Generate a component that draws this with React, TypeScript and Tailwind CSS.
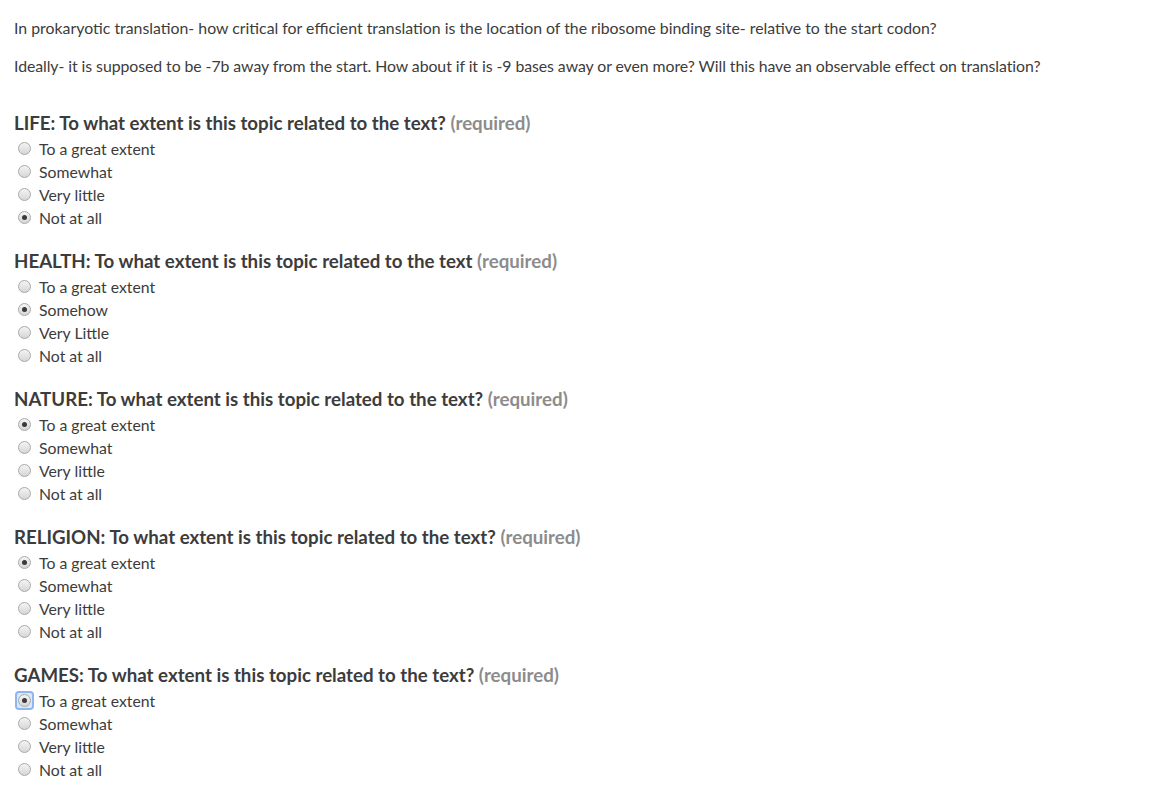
import React from "react";

type Group = { title: string; q: string; options: string[]; checked: number; focus?: boolean };

const groups: Group[] = [
  { title: "LIFE:", q: " To what extent is this topic related to the text?", options: ["To a great extent", "Somewhat", "Very little", "Not at all"], checked: 3 },
  { title: "HEALTH:", q: " To what extent is this topic related to the text", options: ["To a great extent", "Somehow", "Very Little", "Not at all"], checked: 1 },
  { title: "NATURE:", q: " To what extent is this topic related to the text?", options: ["To a great extent", "Somewhat", "Very little", "Not at all"], checked: 0 },
  { title: "RELIGION:", q: " To what extent is this topic related to the text?", options: ["To a great extent", "Somewhat", "Very little", "Not at all"], checked: 0 },
  { title: "GAMES:", q: " To what extent is this topic related to the text?", options: ["To a great extent", "Somewhat", "Very little", "Not at all"], checked: 0, focus: true },
];

function Radio({ checked, focus }: { checked: boolean; focus?: boolean }) {
  return (
    <span
      className={
        "flex items-center justify-center w-[15px] h-[15px] " +
        (focus ? "rounded-[2px] outline outline-2 outline-[#8fb6ef] bg-[#dbe8fb]" : "")
      }
    >
      <span className="flex items-center justify-center w-[13px] h-[13px] rounded-full border border-[#a9a9a9] bg-gradient-to-b from-[#f4f4f4] to-[#d6d6d6]">
        {checked && <span className="w-[5px] h-[5px] rounded-full bg-[#3a3a3a]" />}
      </span>
    </span>
  );
}

export default function App() {
  return (
    <div
      className="w-[1157px] min-h-[799px] bg-white text-[#3c3c3c] px-[14px] pt-[18px]"
      style={{ fontFamily: "Lato, 'Open Sans', sans-serif" }}
    >
      <p className="text-[15.85px] leading-[20px]">
        In prokaryotic translation- how critical for efficient translation is the location of the ribosome binding site- relative to the start codon?
      </p>
      <p className="text-[15.85px] leading-[20px] mt-[18px] tracking-[-0.07px]">
        Ideally- it is supposed to be -7b away from the start. How about if it is -9 bases away or even more? Will this have an observable effect on translation?
      </p>
      <div className="mt-[35px] flex flex-col gap-[20px]">
        {groups.map((g, gi) => (
          <div key={gi} className="flex flex-col">
            <div className="text-[18.7px] leading-[24px] font-bold text-[#3c3c3c]">
              {g.title}
              {g.q} <span className="text-[#8c8c8c]">(required)</span>
            </div>
            <div className="flex flex-col mt-[2px]">
              {g.options.map((o, oi) => (
                <label key={oi} className="flex items-center h-[23px] pl-[3px]">
                  <Radio checked={oi === g.checked} focus={g.focus && oi === g.checked} />
                  <span className="ml-[7px] text-[15.8px] text-[#3c3c3c]">{o}</span>
                </label>
              ))}
            </div>
          </div>
        ))}
      </div>
    </div>
  );
}
